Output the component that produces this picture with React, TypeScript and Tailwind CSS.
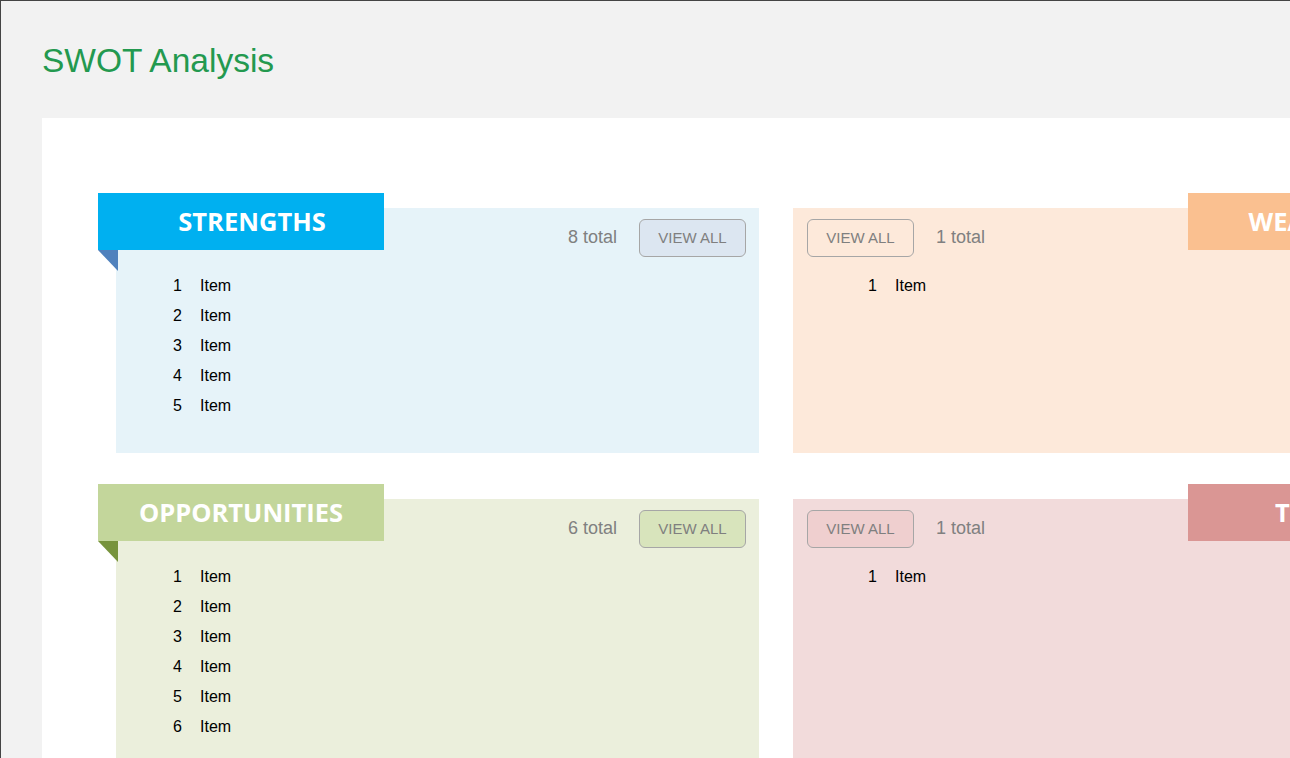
interface Quadrant {
  title: string;
  side: "left" | "right";
  total: number;
  items: number;
  bannerClass: string;
  panelClass: string;
  buttonClass: string;
  foldColor: string;
}

const quadrants: Quadrant[] = [
  {
    title: "STRENGTHS",
    side: "left",
    total: 8,
    items: 5,
    bannerClass: "bg-[#00b0f0] pl-[22px]",
    panelClass: "bg-[#e6f3f9] h-[245px]",
    buttonClass: "bg-[#dce6f1]",
    foldColor: "#4f81bd",
  },
  {
    title: "WEAKNESSES",
    side: "right",
    total: 1,
    items: 1,
    bannerClass: "bg-[#fac090]",
    panelClass: "bg-[#fde9da] h-[245px]",
    buttonClass: "bg-[#fde9da]",
    foldColor: "#e46c0a",
  },
  {
    title: "OPPORTUNITIES",
    side: "left",
    total: 6,
    items: 6,
    bannerClass: "bg-[#c3d69b]",
    panelClass: "bg-[#ebefdc] h-[290px]",
    buttonClass: "bg-[#d8e4bc]",
    foldColor: "#77933c",
  },
  {
    title: "THREATS",
    side: "right",
    total: 1,
    items: 1,
    bannerClass: "bg-[#da9694]",
    panelClass: "bg-[#f2dbdb] h-[290px]",
    buttonClass: "bg-[#efcfcf]",
    foldColor: "#953735",
  },
];

function ViewAll({ className }: { className: string }) {
  return (
    <button
      className={`w-[107px] h-[38px] rounded-[6px] border border-[#a6a6a6] text-[15px] text-[#7f7f7f] ${className}`}
    >
      VIEW ALL
    </button>
  );
}

function QuadrantCard({ q }: { q: Quadrant }) {
  const isLeft = q.side === "left";
  return (
    <div className={`relative pt-[15px] ${isLeft ? "w-[661px]" : "w-[681px]"}`}>
      {/* banner */}
      <div
        className={`absolute top-0 w-[286px] h-[57px] flex items-center justify-center text-white text-[25.5px] font-bold ${
          isLeft ? "left-0" : "right-0"
        } ${q.bannerClass}`}
        style={{ fontFamily: '"Open Sans", "Noto Sans", sans-serif' }}
      >
        {q.title}
      </div>
      {/* folded corner */}
      <svg
        className={`absolute top-[57px] w-[20px] h-[21px] ${isLeft ? "left-0" : "right-0"}`}
        viewBox="0 0 20 21"
      >
        {isLeft ? (
          <polygon points="0,0 20,0 20,21" fill={q.foldColor} />
        ) : (
          <polygon points="0,0 20,0 0,21" fill={q.foldColor} />
        )}
      </svg>

      <div className={`${isLeft ? "ml-[18px] w-[643px]" : "mr-[18px] w-[663px]"} ${q.panelClass}`}>
        {isLeft ? (
          <div className="flex items-center justify-end gap-[22px] pt-[11px] pr-[13px]">
            <span className="text-[18px] text-[#808080] -mt-px">{q.total} total</span>
            <ViewAll className={q.buttonClass} />
          </div>
        ) : (
          <div className="flex items-center gap-[22px] pt-[11px] pl-[14px]">
            <ViewAll className={q.buttonClass} />
            <span className="text-[18px] text-[#808080] -mt-px">{q.total} total</span>
          </div>
        )}

        <ul className={`mt-[14px] ${isLeft ? "pl-[57px]" : "pl-[75px]"}`}>
          {Array.from({ length: q.items }).map((_, i) => (
            <li key={i} className="flex leading-[30px] text-[16px] text-black">
              <span className="w-[27px]">{i + 1}</span>
              <span>Item</span>
            </li>
          ))}
        </ul>
      </div>
    </div>
  );
}

export default function App() {
  return (
    <div
      className="w-full h-[758px] overflow-hidden flex flex-col border-t border-l border-[#444444] bg-[#f2f2f2]"
      style={{ fontFamily: '"Liberation Sans", Arial, sans-serif' }}
    >
      <div className="h-[117px] shrink-0 pt-[41px] pl-[41px]">
        <h1 className="text-[33.5px] leading-[38px] text-[#23994f]">SWOT Analysis</h1>
      </div>

      <div className="flex-1 ml-[41px] w-[1500px] bg-white pt-[75px] pl-[56px]">
        <div className="grid grid-cols-[661px_681px] gap-x-[34px] gap-y-[31px]">
          {quadrants.map((q) => (
            <QuadrantCard key={q.title} q={q} />
          ))}
        </div>
      </div>
    </div>
  );
}
